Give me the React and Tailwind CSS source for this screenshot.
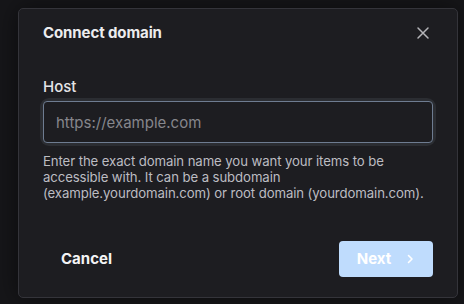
import React from 'react';

const font = { fontFamily: 'Inter, "Open Sans", sans-serif' };

export default function App() {
  return (
    <div className="w-[464px] h-[304px] bg-[#161619] overflow-hidden pt-2 pl-[18px]" style={font}>
      <div className="w-[440px] h-[290px] border border-[#34343a] rounded-[5px] bg-[#1d1d21] px-6 flex flex-col shadow-[0_0_24px_rgba(0,0,0,0.5)]">
        {/* header */}
        <div className="flex items-center justify-between h-[48px]">
          <h2 className="text-[15px] leading-5 font-bold text-[#ececee] tracking-[-0.1px]">Connect domain</h2>
          <button className="w-6 h-6 flex items-center justify-center text-[#b4b4b8] mr-[-2px]">
            <svg width="14" height="14" viewBox="0 0 14 14" fill="none" stroke="currentColor" strokeWidth="1.5" strokeLinecap="round">
              <path d="M2 2L12 12M12 2L2 12" />
            </svg>
          </button>
        </div>

        <label className="mt-5 text-[15px] leading-5 font-medium text-[#e4e4e7]">Host</label>
        <div className="mt-1 rounded-[6px] shadow-[0_0_0_3px_#2b2d32]">
          <input
            placeholder="https://example.com"
            className="w-full h-[42px] rounded-[4px] border border-[#6e7c91] bg-[#1d1d21] px-3 text-[15px] text-[#e4e4e7] placeholder:text-[#86868c] outline-none"
            style={font}
          />
        </div>
        <p className="mt-[10px] text-[13.2px] leading-4 text-[#bcbcc2] tracking-[-0.1px]">
          Enter the exact domain name you want your items to be<br />
          accessible with. It can be a subdomain<br />
          (example.yourdomain.com) or root domain (yourdomain.com).
        </p>

        <div className="mt-10 flex items-center justify-between">
          <button className="h-9 px-[18px] text-[15px] font-bold text-[#f4f4f5]">Cancel</button>
          <button className="h-9 w-[94px] rounded-[4px] bg-[#bfdcfd] flex items-center justify-center gap-[14px] text-[15px] font-bold text-white">
            Next
            <svg width="10" height="10" viewBox="0 0 10 10" fill="none" stroke="currentColor" strokeWidth="1.6" strokeLinecap="round" strokeLinejoin="round">
              <path d="M3.5 1.5L7 5L3.5 8.5" />
            </svg>
          </button>
        </div>
      </div>
    </div>
  );
}
